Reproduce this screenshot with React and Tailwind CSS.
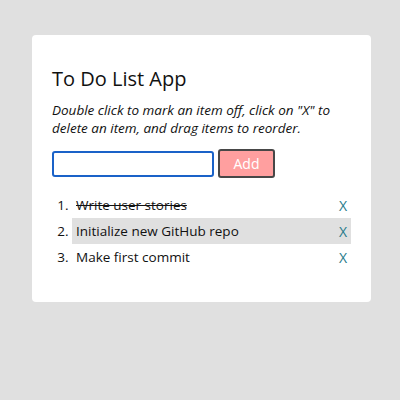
const items = [
    { id: 1, text: "Write user stories", done: true },
    { id: 2, text: "Initialize new GitHub repo", done: false, hover: true },
    { id: 3, text: "Make first commit", done: false },
];

function App() {
    return (
        <div className="h-[400px] w-[400px] bg-[#e0e0e0] pt-[35px] pl-[32px] font-['Open_Sans',sans-serif] text-[#111]">
            <div className="w-[339px] h-[267px] bg-white rounded-[4px] px-[20px] pt-[30px]">
                <h1 className="text-[20px] leading-[28px]">To Do List App</h1>
                <p className="mt-[8px] text-[13.5px] leading-[18px] italic">
                    Double click to mark an item off, click on "X" to delete an item, and drag items to reorder.
                </p>
                <div className="flex items-center gap-[4px] mt-[12px]">
                    <input className="w-[162px] h-[26px] border-2 border-[#1a62c8] rounded-[3px] outline-none px-1" />
                    <button className="w-[57px] h-[29px] bg-[#ff9f9f] text-white text-[14px] rounded-[3px] border-2 border-[#474747]">
                        Add
                    </button>
                </div>
                <ol className="list-decimal pl-[20px] mt-[14px] text-[13.5px]">
                    {items.map((item) => (
                        <li
                            key={item.id}
                            className={"pl-[4px] marker:text-[#111] " + (item.hover ? "bg-[#e0e0e0]" : "")}
                        >
                            <div className="flex items-center justify-between h-[26px] pr-[4px]">
                                <span className={item.done ? "line-through" : ""}>{item.text}</span>
                                <span className="text-[#267a8a] text-[14px]">X</span>
                            </div>
                        </li>
                    ))}
                </ol>
            </div>
        </div>
    );
}

export default App;
